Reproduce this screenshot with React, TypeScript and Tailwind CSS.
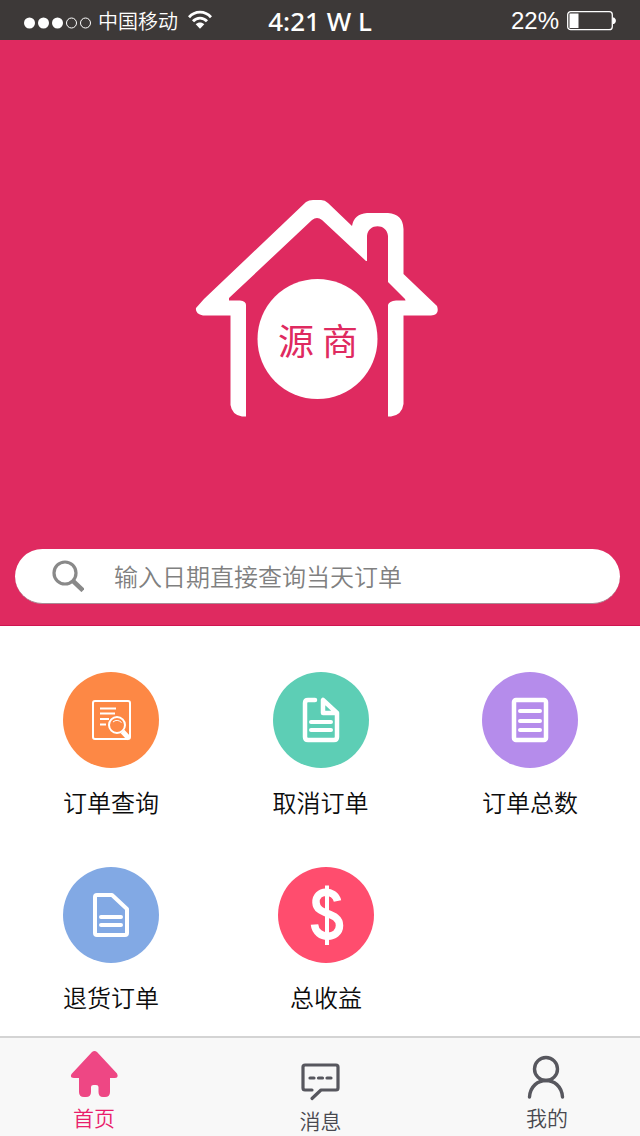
import type { ReactNode } from 'react';

function StatusBar() {
  return (
    <header className="flex h-10 items-center justify-between bg-[#3d3938] px-6 pt-0.5 text-white">
      <div className="flex flex-1 items-center">
        <svg className="mt-1 h-4 w-[68px]" viewBox="0 0 68 16" aria-hidden="true">
          <g fill="#fff">
            <circle cx="5.5" cy="8" r="5.5" />
            <circle cx="19.5" cy="8" r="5.5" />
            <circle cx="33.5" cy="8" r="5.5" />
          </g>
          <g fill="none" stroke="#fff">
            <circle cx="47.5" cy="8" r="5" />
            <circle cx="61.5" cy="8" r="5" />
          </g>
        </svg>
        <span className="ml-1.5 text-xl leading-6 font-[350]">中国移动</span>
        <svg className="ml-2.5 mb-0.5 h-5 w-6" viewBox="0 0 24 20" aria-hidden="true">
          <g fill="none" stroke="#fff" strokeWidth="2.8">
            <path d="M1 7.2C7 .4 17 .4 23 7.2" />
            <path d="M5 11.3C9 7 15 7 19 11.3" />
          </g>
          <path d="M7.7 14.3C10.2 11.8 13.8 11.8 16.3 14.3L12 18.8z" fill="#fff" />
        </svg>
      </div>
      <span className="font-['Noto_Sans'] text-[26px] leading-8 font-medium">4:21 W L</span>
      <div className="flex flex-1 items-center justify-end gap-2">
        <span className="font-['Liberation_Sans'] text-2xl leading-6">22%</span>
        <svg className="h-5 w-[49px]" viewBox="0 0 49 20" aria-hidden="true">
          <rect x=".7" y=".7" width="44.6" height="18" rx="3" fill="none" stroke="#fff" strokeWidth="1.3" />
          <rect x="2.5" y="2.5" width="9" height="14.5" fill="#fff" />
          <path d="M46 6.5h1c2.5 1.5 2.5 5 0 6.5h-1z" fill="#fff" />
        </svg>
      </div>
    </header>
  );
}

function Logo() {
  return (
    <svg className="h-[218px] w-[244px]" viewBox="195 199 244 218" role="img" aria-label="源商">
      <path
        fill="#fff"
        fillRule="evenodd"
        d="M306 202Q309 200 313 200H321Q325 200 328 203L352 226Q354 214 367 213H388Q403 214 403.5 229V274L437 306Q440 315 431 315.500H403.500V404Q402 415 391 416.500H388V305Q389 301 396 300.500H405.500L405 299L388 282V236C387 223 368 223 367 236V261H366L322 220Q317 216 312 220L229 298V300.500H240Q246 301 246 305V416.500H242Q232 415 230.500 405V315.500H203Q195 314 196 308L204 299Z"
      />
      <circle cx="317.500" cy="339" r="60" fill="#fff" />
      <g fill="#df2a60" fontSize="36" fontFamily="Noto Sans CJK SC, sans-serif">
        <text x="278" y="355">源</text>
        <text x="322" y="355">商</text>
      </g>
    </svg>
  );
}

function Search() {
  return (
    <label className="mr-5 ml-[15px] flex h-[55px] items-center rounded-full border-b border-[#a98a94] bg-white pl-[37px]">
      <svg className="h-8 w-8 shrink-0" viewBox="0 0 32 32" fill="none" stroke="#898989" aria-hidden="true">
        <circle cx="13" cy="13" r="11" strokeWidth="3.200" />
        <path d="M20.500 20.500L31 30.500" strokeWidth="4.500" />
      </svg>
      <input
        type="search"
        aria-label="订单日期"
        placeholder="输入日期直接查询当天订单"
        className="ml-[30px] min-w-0 flex-1 bg-transparent pr-8 text-2xl font-[350] text-[#333] outline-none placeholder:text-[#808080]"
      />
    </label>
  );
}

function Tile({ label, color, children }: { label: string; color: string; children: ReactNode }) {
  return (
    <button type="button" className="flex w-24 flex-col items-center gap-4">
      <span className={`block rounded-full ${color}`}>
        <svg className="h-24 w-24" viewBox="0 0 96 96" fill="none" stroke="#fff" aria-hidden="true">
          {children}
        </svg>
      </span>
      <span className="text-2xl leading-9 font-[350] whitespace-nowrap text-[#0c0c0c]">{label}</span>
    </button>
  );
}

function Tab({ label, active, children }: { label: string; active?: boolean; children: ReactNode }) {
  return (
    <a
      href="#"
      aria-current={active ? 'page' : undefined}
      className={`flex w-12 flex-col items-center text-[21px] leading-8 font-[350] whitespace-nowrap ${active ? 'text-[#e91e6c]' : 'text-[#48484f]'}`}
    >
      {children}
      <span>{label}</span>
    </a>
  );
}

export default function App() {
  return (
    <div className="flex min-h-screen flex-col bg-white font-['Noto_Sans_CJK_SC',sans-serif]">
      <StatusBar />
      <section className="flex flex-col border-b border-[#cf1450] bg-[#df2a60] pt-[159px] pb-[21px]">
        <div className="mb-[132px] flex justify-center pr-1.5">
          <Logo />
        </div>
        <Search />
      </section>

      <main className="flex flex-1 flex-col gap-[47px] pt-[46px] pr-[62px] pl-[63px]">
        <div className="flex justify-between">
          <Tile label="订单查询" color="bg-[#fd8845]">
            <rect x="30" y="29" width="37" height="38" rx="2" strokeWidth="2" />
            <path d="M37 36.500H53M37 41.500H52M37 47H46M37 52.500H43" strokeWidth="2" />
            <circle cx="54" cy="53" r="8" strokeWidth="2" fill="#fd8845" />
            <path d="M50 50Q54 46.500 58.500 50.500" strokeWidth="1" />
            <path d="M59.500 59.500L66 66.500" strokeWidth="5" />
          </Tile>
          <Tile label="取消订单" color="bg-[#5dceb5]">
            <g strokeWidth="4.500" strokeLinecap="round" strokeLinejoin="round">
              <path d="M42 28H35Q32 28 32 31V65Q32 68 35 68H61Q64 68 64 65V41L50 28V41H64" />
              <path d="M38 50H58M38 58H58" strokeWidth="4" />
            </g>
          </Tile>
          <Tile label="订单总数" color="bg-[#b58ceb]">
            <rect x="32" y="28" width="32" height="40" rx="2" strokeWidth="4.500" />
            <path d="M38 39H58M38 49H58M38 58H58" strokeWidth="4" strokeLinecap="round" />
          </Tile>
        </div>
        <div className="flex gap-[119px]">
          <Tile label="退货订单" color="bg-[#82a9e4]">
            <g strokeWidth="4" strokeLinecap="round" strokeLinejoin="round">
              <path d="M34 28H49L64 42V66Q64 68 62 68H34Q32 68 32 66V30Q32 28 34 28Z" />
              <path d="M38 50H58M38 58H58" />
            </g>
          </Tile>
          <Tile label="总收益" color="bg-[#ff4d6e]">
            <path d="M59.500 34C57 22 37.500 22 38 35.500C38.500 49 61.500 44 61.500 58.500C61.500 73 38 73 36.500 57.500" strokeWidth="7.500" />
            <path d="M49 18.500V78" strokeWidth="4" />
          </Tile>
        </div>
      </main>

      <nav className="flex h-[100px] justify-between border-t-2 border-[#d4d4d4] bg-[#f8f8f8] pt-[13px] pr-[69px] pl-[70px]">
        <Tab label="首页" active>
          <svg className="h-[50px] w-12" viewBox="0 -3 48 50" aria-hidden="true">
            <path
              fill="#ee4784"
              d="M22 -2Q24.500 -4 27 -2L47 19.500Q49 24 45 24H40V38Q40 43 35 43H33Q28.500 43 28.500 38V33Q28.500 31 26 31H23.500Q21 31 21 33V38Q21 43 16 43H14Q9 43 9 38V24H4Q-.5 24 1.500 20Z"
            />
          </svg>
        </Tab>
        <Tab label="消息">
          <svg className="h-[53px] w-12" viewBox="0 -3 48 53" fill="none" stroke="#57575e" strokeWidth="3.200" strokeLinecap="round" strokeLinejoin="round" aria-hidden="true">
            <path d="M15 36H8Q6 36 6 34V13Q6 11 8 11H39Q41 11 41 13V34Q41 36 39 36H24L15 44.500" />
            <path d="M13 24H17M21.500 24H25.500M30 24H34" />
          </svg>
        </Tab>
        <Tab label="我的">
          <svg className="h-[50px] w-12" viewBox="0 -4 48 50" fill="none" stroke="#57575e" strokeWidth="3.400" strokeLinecap="round" aria-hidden="true">
            <circle cx="23" cy="14" r="11.500" />
            <path d="M6.500 42C8 20 38 20 39.500 42" />
          </svg>
        </Tab>
      </nav>
    </div>
  );
}
